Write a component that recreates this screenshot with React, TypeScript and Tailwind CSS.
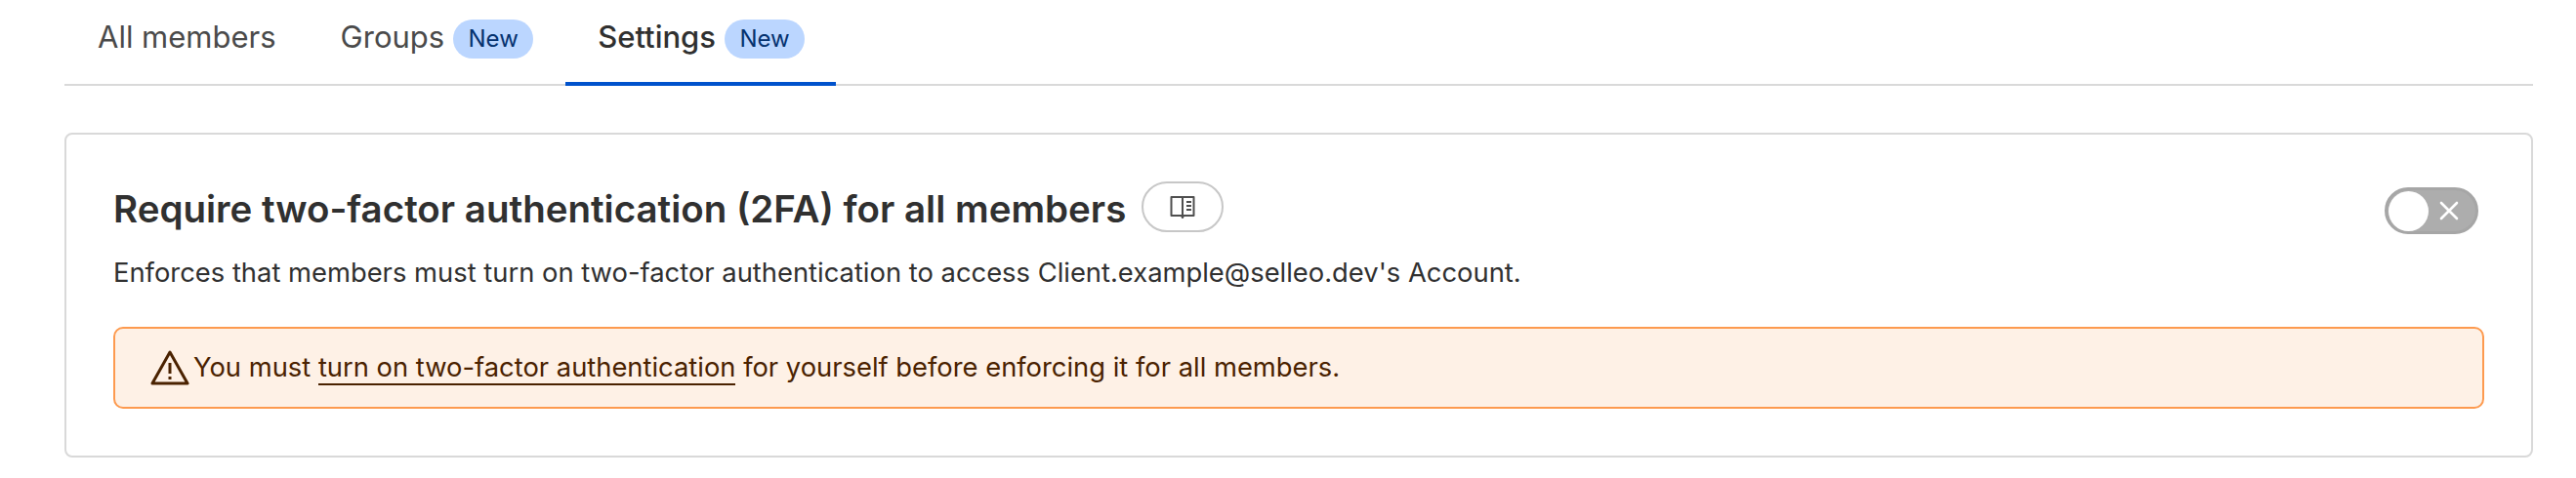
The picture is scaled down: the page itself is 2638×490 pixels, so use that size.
import React from "react";

function NewBadge() {
  return (
    <span className="ml-[9px] flex h-[40px] w-[82px] items-center justify-center rounded-[20px] bg-[#bbd6ff] text-[24px] font-normal text-[#05326f]">
      New
    </span>
  );
}

export default function App() {
  return (
    <div className="h-[490px] w-[2638px] overflow-hidden bg-white pl-[66px] pr-[44px] font-['Inter',sans-serif] text-[#303030]">
      <nav className="flex h-[88px] border-b-2 border-[#d9d9d9] text-[31px]">
        <div className="flex h-[86px] items-start px-[34px] pt-[15px] text-[#4a4a4a]">All members</div>
        <div className="flex h-[86px] items-start pl-[32px] pr-[33px] pt-[15px] text-[#4a4a4a]">
          Groups
          <span className="mt-[5px]"><NewBadge /></span>
        </div>
        <div className="flex h-[88px] w-[277px] items-start border-b-4 border-[#0052cc] px-[33px] pt-[15px] font-medium text-[#303030]">
          Settings
          <span className="mt-[5px]"><NewBadge /></span>
        </div>
      </nav>

      <section className="mt-[48px] h-[333px] rounded-[8px] border-2 border-[#d9d9d9] px-[48px] pt-[48px]">
        <div className="flex items-start justify-between">
          <div className="flex items-start">
            <h2 className="pt-[2px] text-[38.5px] font-semibold leading-[52px]">Require two-factor authentication (2FA) for all members</h2>
            <button className="ml-[16px] flex h-[52px] w-[84px] items-center justify-center rounded-[26px] border-2 border-[#c7c7c7] bg-white">
              <svg width="26" height="26" viewBox="0 0 26 26" fill="none" stroke="#4f4f4f" strokeWidth="2">
                <path d="M13 3 V24 M13 3 H1.5 V22 H12 L13 24 L14 22 H24.5 V3 Z" strokeLinejoin="round" />
                <path d="M17 8 H22 M17 12 H22 M17 16 H22" />
              </svg>
            </button>
          </div>
          <div className="mr-[6px] mt-[6px] flex h-[48px] w-[96px] items-center rounded-[24px] border-[3px] border-[#a6a6a6] bg-[#adadad] pl-[1px]">
            <span className="h-[41px] w-[41px] rounded-full bg-white" />
            <svg className="ml-[10px]" width="22" height="22" viewBox="0 0 22 22" stroke="white" strokeWidth="2.6" strokeLinecap="round">
              <path d="M3 3 L19 19 M19 3 L3 19" />
            </svg>
          </div>
        </div>
        <p className="mt-[19px] text-[27.37px] leading-[40px]">
          Enforces that members must turn on two-factor authentication to access Client.example@selleo.dev's Account.
        </p>
        <div className="mt-[36px] flex h-[84px] items-center rounded-[10px] border-2 border-[#fd9a4f] bg-[#fef1e6] pl-[36px] text-[27.35px] text-[#4a2200]">
          <svg width="40" height="38" viewBox="0 0 40 38" fill="none" stroke="#4a2200" strokeWidth="3" strokeLinejoin="round" className="mr-[4px]">
            <path d="M20 3 L38 35 H2 Z" />
            <path d="M20 14 V25 M20 28 V31" />
          </svg>
          <span>
            You must <span className="border-b-2 border-[#4a2200]">turn on two-factor authentication</span> for yourself before enforcing it for all members.
          </span>
        </div>
      </section>
    </div>
  );
}
